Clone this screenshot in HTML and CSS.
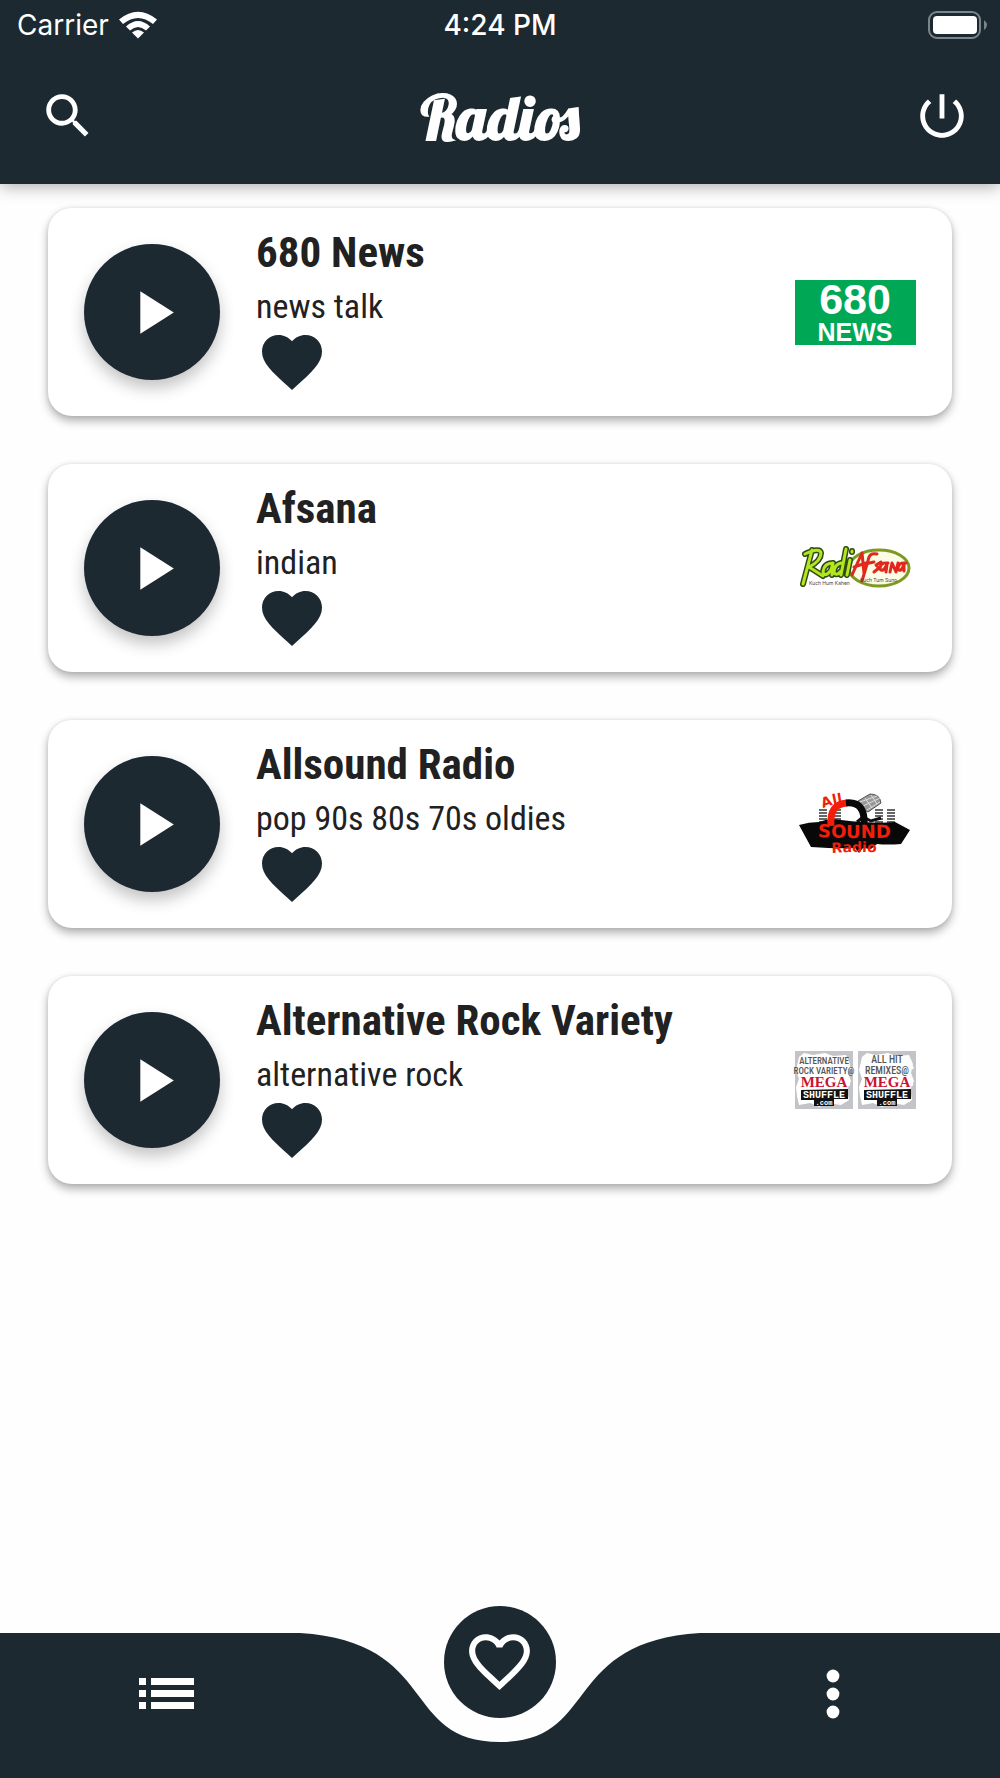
FILE: index.html
```html
<!DOCTYPE html>
<html lang="en">

<head>
    <meta charset="UTF-8">
    <meta name="viewport" content="width=device-width, initial-scale=1.0">
    <title>Radios</title>
    <link rel="stylesheet" href="styles.css">
</head>

<body>
    <!-- shared icons -->
    <svg class="sprite" aria-hidden="true">
        <symbol id="icon-play" viewBox="0 0 24 24">
            <path d="M8 5v14l11-7z" />
        </symbol>
        <symbol id="icon-heart" viewBox="0 0 24 24">
            <path d="M12 21.35l-1.45-1.32C5.4 15.36 2 12.28 2 8.5 2 5.42 4.42 3 7.5 3c1.74 0 3.41.81 4.5 2.09C13.09 3.81 14.76 3 16.5 3 19.58 3 22 5.42 22 8.5c0 3.78-3.4 6.86-8.55 11.54L12 21.35z" />
        </symbol>
    </svg>

    <header class="header">
        <div class="status-bar">
            <div class="carrier">
                <span>Carrier</span>
                <svg class="wifi" viewBox="0 0 38 28">
                    <path d="M0 8.5Q19-7 38 8.5l-4 4.500Q19 1 4 13z" />
                    <path d="M7 15.5q12-11 24 0l-4 4q-8-7-16 0z" />
                    <path d="M13 21.5q6-5 12 0l-6 6z" />
                </svg>
            </div>
            <span class="time">4:24 PM</span>
            <svg class="battery" viewBox="0 0 60 28">
                <rect class="battery-case" x="1" y="1" width="51" height="26" rx="8" />
                <rect x="5" y="5" width="44" height="18" rx="4" />
                <path class="battery-tip" d="M56 9q6 5 0 10z" />
            </svg>
        </div>
        <div class="toolbar">
            <button class="icon-button search" aria-label="Search">
                <svg viewBox="0 0 24 24">
                    <path d="M15.5 14h-.79l-.28-.27C15.41 12.59 16 11.11 16 9.5 16 5.91 13.09 3 9.5 3S3 5.91 3 9.5 5.91 16 9.5 16c1.61 0 3.09-.59 4.23-1.57l.27.28v.79l5 4.99L20.49 19l-4.99-5zm-6 0C7.01 14 5 11.99 5 9.5S7.01 5 9.5 5 14 7.01 14 9.5 11.99 14 9.5 14z" />
                </svg>
            </button>
            <h1 class="title">Radios</h1>
            <button class="icon-button power" aria-label="Power">
                <svg viewBox="0 0 24 24">
                    <path d="M13 3h-2v10h2V3zm4.83 2.17l-1.42 1.42C17.99 7.86 19 9.81 19 12c0 3.87-3.13 7-7 7s-7-3.13-7-7c0-2.19 1.01-4.14 2.58-5.42L6.17 5.17C4.23 6.82 3 9.26 3 12c0 4.97 4.03 9 9 9s9-4.03 9-9c0-2.74-1.23-5.18-3.17-6.83z" />
                </svg>
            </button>
        </div>
    </header>

    <main class="radio-list">
        <article class="radio">
            <button class="play" aria-label="Play 680 News"><svg viewBox="0 0 24 24"><use href="#icon-play" /></svg></button>
            <div class="radio-info">
                <h2>680 News</h2>
                <p>news talk</p>
                <button class="like" aria-label="Favorite"><svg viewBox="0 0 24 24"><use href="#icon-heart" /></svg></button>
            </div>
            <svg class="logo" viewBox="0 0 121 65">
                <rect width="121" height="65" fill="#00a856" />
                <g fill="#fff" font-family="'Liberation Sans', sans-serif" font-weight="700" text-anchor="middle">
                    <text x="60" y="34" font-size="43">680</text>
                    <text x="60" y="61" font-size="25">NEWS</text>
                </g>
            </svg>
        </article>

        <article class="radio">
            <button class="play" aria-label="Play Afsana"><svg viewBox="0 0 24 24"><use href="#icon-play" /></svg></button>
            <div class="radio-info">
                <h2>Afsana</h2>
                <p>indian</p>
                <button class="like" aria-label="Favorite"><svg viewBox="0 0 24 24"><use href="#icon-heart" /></svg></button>
            </div>
            <svg class="logo" viewBox="0 0 121 50">
                <ellipse cx="84" cy="25" rx="30" ry="18" fill="#fbfbe6" stroke="#7c9a22" stroke-width="3" />
                <g fill="none" stroke-linejoin="round" stroke-linecap="round">
                    <g stroke="#2f4a16" stroke-width="6">
                        <path d="M8 41L17 7M10 11q15-7 16-1q0 8-12 14l14 9" />
                        <path d="M38 20q-9 0-10 9q2 6 8-2l2-7-1 12M51 6l-5 26M46 20q-7 2-7 9q2 5 7-1M55 17l-3 15M57 8v1" />
                    </g>
                    <g stroke="#b4e61d" stroke-width="3">
                        <path d="M8 41L17 7M10 11q15-7 16-1q0 8-12 14l14 9" />
                        <path d="M38 20q-9 0-10 9q2 6 8-2l2-7-1 12M51 6l-5 26M46 20q-7 2-7 9q2 5 7-1M55 17l-3 15M57 8v1" />
                    </g>
                    <g stroke="#e0281c" stroke-width="3">
                        <path d="M57 32L67 10l2 20M59 24l12-4M82 11q-8-2-9 7l-6 20M70 21l9-2" />
                        <path d="M86 19l-5 3 3 3-5 4M93 20q-8-1-8 6q3 4 7-5l-1 8M95 29l2-9 4 9 2-9M111 20q-8-1-8 6q3 4 6-5l0 7" />
                    </g>
                </g>
                <text x="14" y="42" font-family="Inter, sans-serif" font-size="5" fill="#444">Kuch Hum Kahen</text>
                <text x="65" y="39" font-family="Inter, sans-serif" font-size="5" fill="#444">Kuch Tum Suno</text>
            </svg>
        </article>

        <article class="radio">
            <button class="play" aria-label="Play Allsound Radio"><svg viewBox="0 0 24 24"><use href="#icon-play" /></svg></button>
            <div class="radio-info">
                <h2>Allsound Radio</h2>
                <p>pop 90s 80s 70s oldies</p>
                <button class="like" aria-label="Favorite"><svg viewBox="0 0 24 24"><use href="#icon-heart" /></svg></button>
            </div>
            <svg class="logo" viewBox="0 0 121 64">
                <!-- equalizer bars -->
                <path d="M28 17v18M42 17v18M84 17v18M96 17v18" stroke="#666" stroke-width="8" stroke-dasharray="2 1" />
                <!-- microphone -->
                <path d="M63 9l12-7q10 0 11 9l-13 9q-8-3-10-11z" fill="#999" stroke="#555" />
                <path d="M65 10l17-6M68 14l17-8M72 18l13-8M70 6l7 10M76 3l6 9" stroke="#ddd" />
                <path d="M62 30l6-5 8 4 10-3" fill="none" stroke="#111" stroke-width="3" />
                <path d="M4 33q10-3 20-3 9-4 22-2 34 4 54 2l15 8-9 14q-14 1-24 0l-6 5-8-1-4 5-4-5q-16 1-44-1z" fill="#080808" />
                <!-- headphones -->
                <path d="M36 34q-2-22 16-23" fill="none" stroke="#f41d0a" stroke-width="7" />
                <path d="M51 11q20-2 18 23" fill="none" stroke="#080808" stroke-width="7" />
                <g fill="#f41d0a" font-family="'DejaVu Sans', sans-serif" font-weight="700">
                    <path id="all-curve" d="M28 16Q43 10 64 10" fill="none" />
                    <path id="sound-curve" d="M23 45Q60 47 112 45" fill="none" />
                    <path id="radio-curve" d="M37 61Q62 59 98 61" fill="none" />
                    <text font-size="14"><textPath href="#all-curve">All</textPath></text>
                    <text font-size="18"><textPath href="#sound-curve">SOUND</textPath></text>
                    <text font-size="14"><textPath href="#radio-curve">Radio</textPath></text>
                </g>
            </svg>
        </article>

        <article class="radio">
            <button class="play" aria-label="Play Alternative Rock Variety"><svg viewBox="0 0 24 24"><use href="#icon-play" /></svg></button>
            <div class="radio-info">
                <h2>Alternative Rock Variety</h2>
                <p>alternative rock</p>
                <button class="like" aria-label="Favorite"><svg viewBox="0 0 24 24"><use href="#icon-heart" /></svg></button>
            </div>
            <svg class="logo" viewBox="0 0 121 58">
                <symbol id="splash" viewBox="0 0 58 58">
                    <rect width="58" height="58" fill="#c3c4c7" />
                    <path d="M4 6l5-4 9 2 12-2 8 3 13-1 4 9-2 9 3 8-4 9 2 10-8 5-12-2-10 4-9-4-11 2-2-9-1-9 3-8-3-9z" fill="#fff" />
                    <path d="M3 18l2 2M54 15l1 3M7 50l4 2M49 49l3 1M53 33l2 1" stroke="#fff" stroke-width="2" />
                    <path d="M6 39l47-1v10H39v7H19v-6H6z" fill="#111" />
                </symbol>
                <use href="#splash" width="58" height="58" />
                <use href="#splash" x="63" width="58" height="58" />
                <g font-family="'Roboto Condensed', 'Liberation Sans Narrow', sans-serif" font-weight="500" fill="#555" text-anchor="middle">
                    <text x="29" y="13" font-size="9">ALTERNATIVE</text>
                    <text x="29" y="23" font-size="9">ROCK VARIETY@</text>
                    <text x="92" y="12" font-size="10">ALL HIT</text>
                    <text x="92" y="23" font-size="10">REMIXES@</text>
                </g>
                <g font-family="'Liberation Serif', serif" font-weight="700" font-size="15" fill="#c91432" text-anchor="middle">
                    <text x="29" y="36">MEGA</text>
                    <text x="92" y="36">MEGA</text>
                </g>
                <g font-family="'Liberation Mono', monospace" font-weight="700" fill="#fff" text-anchor="middle">
                    <text x="29" y="47" font-size="10">SHUFFLE</text>
                    <text x="92" y="47" font-size="10">SHUFFLE</text>
                    <text x="29" y="54" font-size="7">.com</text>
                    <text x="92" y="54" font-size="7">.com</text>
                </g>
            </svg>
        </article>
    </main>

    <nav class="bottom-nav">
        <svg class="nav-shape" viewBox="0 0 1000 145" preserveAspectRatio="none">
            <path d="M0 0H300C440 9 400 109 500 109S560 9 700 0H1000V145H0z" />
        </svg>
        <button class="nav-item" aria-label="List">
            <svg viewBox="0 0 72 72">
                <path d="M8 20h7v7H8zM8 32h7v7H8zM8 44h7v7H8zM20 20h43v7H20zM20 32h43v7H20zM20 44h43v7H20z" />
            </svg>
        </button>
        <button class="nav-item nav-current" aria-label="Favorites">
            <svg viewBox="0 0 24 24">
                <path d="M16.5 3c-1.74 0-3.41.81-4.5 2.09C10.91 3.81 9.24 3 7.5 3 4.42 3 2 5.42 2 8.5c0 3.78 3.4 6.86 8.55 11.54L12 21.35l1.45-1.32C18.6 15.36 22 12.28 22 8.5 22 5.42 19.58 3 16.5 3zm-4.4 15.55l-.1.1-.1-.1C7.14 14.24 4 11.39 4 8.5 4 6.5 5.5 5 7.5 5c1.54 0 3.04.99 3.57 2.36h1.87C13.46 5.99 14.96 5 16.5 5c2 0 3.5 1.5 3.5 3.5 0 2.89-3.14 5.74-7.9 10.05z" />
            </svg>
        </button>
        <button class="nav-item" aria-label="More">
            <svg viewBox="0 0 72 72">
                <circle cx="36" cy="18" r="6.4" />
                <circle cx="36" cy="36" r="6.4" />
                <circle cx="36" cy="54" r="6.4" />
            </svg>
        </button>
    </nav>
</body>

</html>
```
FILE: styles.css
```css
* {
    box-sizing: border-box;
}

body {
    margin: 0;
    min-height: 100vh;
    display: flex;
    flex-direction: column;
    background: #fefefe;
    color: #212121;
    font-family: "Roboto Condensed", "Liberation Sans Narrow", Roboto, sans-serif;
}

button {
    padding: 0;
    border: none;
    background: none;
    cursor: pointer;
}

svg {
    display: block;
    fill: currentColor;
}

.sprite {
    display: none;
}

.header {
    background: #1c2931;
    color: #fff;
    box-shadow: 0 2px 16px rgba(0, 0, 0, 0.35);
}

.status-bar {
    display: grid;
    grid-template-columns: 1fr auto 1fr;
    align-items: center;
    height: 50px;
    padding: 0 12px;
    font-family: Inter, sans-serif;
    font-size: 28px;
}

.carrier {
    display: flex;
    align-items: center;
    gap: 10px;
    padding-left: 5px;
}

.wifi {
    width: 38px;
    height: 28px;
}

.time {
    font-weight: 500;
}

.battery {
    width: 60px;
    height: 28px;
    justify-self: end;
}

.battery-case {
    fill: none;
    stroke: #7c858a;
    stroke-width: 2;
}

.battery-tip {
    fill: #7c858a;
}

.toolbar {
    display: grid;
    grid-template-columns: 1fr auto 1fr;
    align-items: center;
    height: 134px;
    padding: 0 29px 2px;
}

.icon-button {
    width: 58px;
    height: 58px;
    color: #fff;
}

.search {
    margin-left: 10px;
}

.power {
    justify-self: end;
}

.title {
    margin: 0;
    padding-top: 4px;
    font-family: Lobster, "Liberation Serif", serif;
    font-size: 60px;
    font-weight: bold;
    line-height: 64px;
}

.radio-list {
    flex: 1;
    display: flex;
    flex-direction: column;
    gap: 48px;
    padding: 24px 48px 48px;
}

.radio {
    display: flex;
    align-items: center;
    gap: 36px;
    padding: 18px 36px;
    background: #fff;
    border-radius: 24px;
    box-shadow: 0 5px 10px rgba(0, 0, 0, 0.3), 0 0 4px rgba(0, 0, 0, 0.1);
}

.play {
    flex: none;
    display: flex;
    align-items: center;
    justify-content: center;
    width: 136px;
    height: 136px;
    border-radius: 50%;
    background: #1c2931;
    color: #fff;
    box-shadow: 0 8px 16px rgba(0, 0, 0, 0.24);
}

.play svg {
    width: 73px;
    height: 73px;
}

.radio-info {
    flex: 1;
}

.radio-info h2 {
    margin: 0 0 8px;
    font-size: 43px;
    line-height: 52px;
}

.radio-info p {
    margin: 0;
    font-size: 34px;
    line-height: 40px;
}

.like {
    display: block;
    width: 72px;
    height: 72px;
    color: #1c2931;
}

.logo {
    flex: none;
    width: 121px;
    overflow: visible;
}

.bottom-nav {
    position: relative;
    display: grid;
    grid-template-columns: repeat(3, 1fr);
    align-items: center;
    justify-items: center;
    height: 145px;
    padding-bottom: 24px;
}

.nav-shape {
    position: absolute;
    inset: 0;
    width: 100%;
    height: 100%;
    color: #1c2931;
}

.nav-item {
    position: relative;
    width: 72px;
    height: 72px;
    color: #fff;
}

/* raised button sitting in the dip of the bar */
.nav-current {
    top: -32px;
    display: flex;
    align-items: center;
    justify-content: center;
    width: 112px;
    height: 112px;
    border-radius: 50%;
    background: #1c2931;
}

.nav-current svg {
    width: 73px;
    height: 73px;
}
```
